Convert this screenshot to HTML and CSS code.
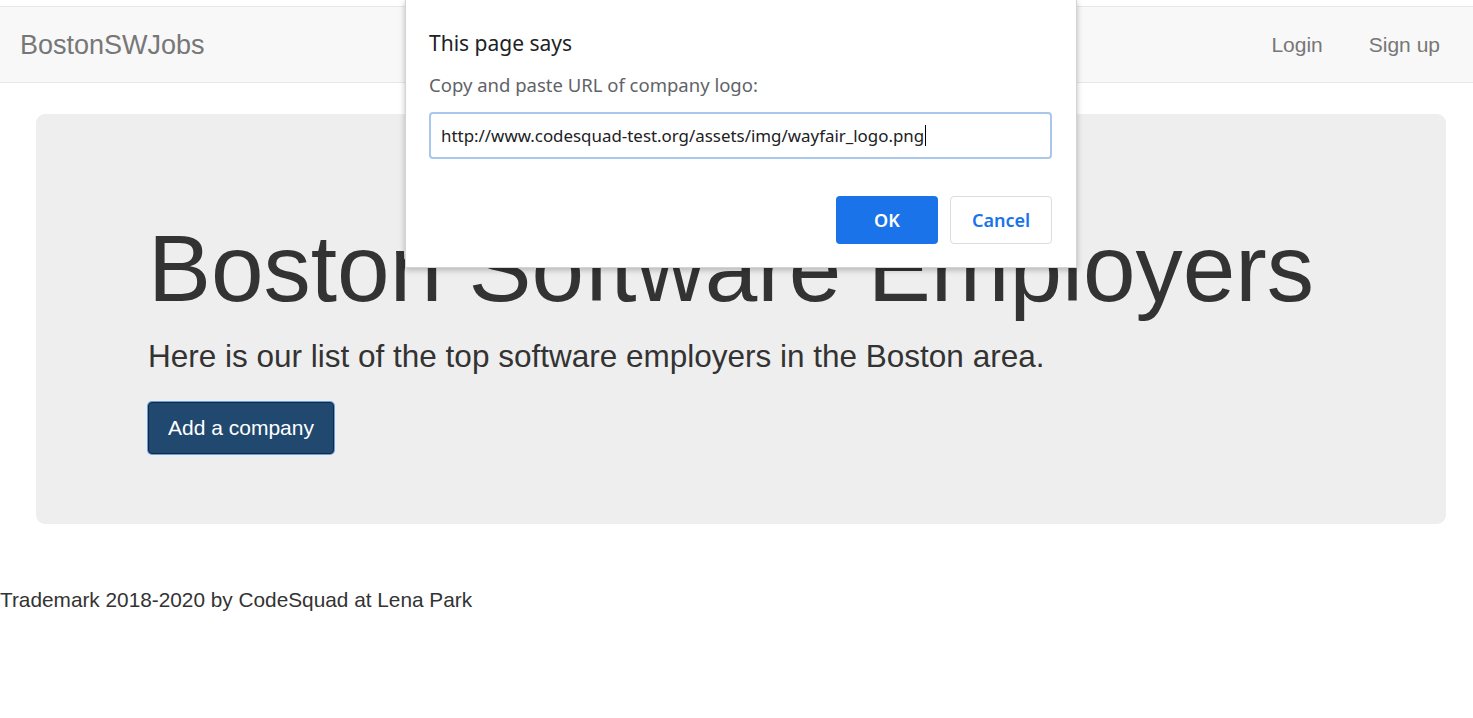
FILE: index.html
```html
<!DOCTYPE html>
<html lang="en">
<head>
<meta charset="utf-8">
<title>BostonSWJobs</title>
<link rel="stylesheet" href="styles.css">
</head>
<body>
<div class="page">
  <nav class="navbar">
    <a class="brand" href="#">BostonSWJobs</a>
    <ul class="nav-links">
      <li><a href="#">Login</a></li>
      <li><a href="#">Sign up</a></li>
    </ul>
  </nav>
  <main class="main">
    <section class="jumbotron">
      <h1 class="title">Boston Software Employers</h1>
      <p class="lead">Here is our list of the top software employers in the Boston area.</p>
      <button class="btn-add" type="button">Add a company</button>
    </section>
  </main>
  <footer class="footer">Trademark 2018-2020 by CodeSquad at Lena Park</footer>
</div>
<div class="dialog">
  <div class="dialog-title">This page says</div>
  <div class="dialog-msg">Copy and paste URL of company logo:</div>
  <div class="dialog-input"><span class="input-text">http://www.codesquad-test.org/assets/img/wayfair_logo.png</span><span class="caret"></span></div>
  <div class="dialog-actions">
    <button class="btn-ok" type="button">OK</button>
    <button class="btn-cancel" type="button">Cancel</button>
  </div>
</div>
</body>
</html>
```
FILE: styles.css
```css
* { box-sizing: border-box; }
html, body { margin: 0; padding: 0; background: #fff; }
body {
  font-family: "Liberation Sans", Arial, Helvetica, sans-serif;
  color: #333;
  width: 1473px;
  height: 718px;
  overflow: hidden;
}
.page { padding-top: 6px; }
.navbar {
  height: 77px;
  background: #f8f8f8;
  border-top: 1px solid #e7e7e7;
  border-bottom: 1px solid #e7e7e7;
  display: flex;
  align-items: center;
  justify-content: space-between;
  padding: 0 33px 0 20px;
}
.brand {
  color: #777;
  font-size: 27px;
  text-decoration: none;
  line-height: 1;
  padding-top: 2px;
}
.nav-links {
  list-style: none;
  margin: 0;
  padding: 0;
  display: flex;
  gap: 46px;
}
.nav-links a {
  color: #777;
  font-size: 21px;
  text-decoration: none;
  line-height: 1;
}
.main { padding: 31px 27px 0 36px; }
.jumbotron {
  background: #eee;
  border-radius: 9px;
  height: 410px;
  padding: 102px 0 0 112px;
}
.title {
  margin: 0;
  font-size: 94.5px;
  font-weight: 400;
  line-height: 104px;
  color: #333;
}
.lead {
  margin: 14px 0 24px;
  font-size: 31.5px;
  line-height: 44px;
  color: #333;
}
.btn-add {
  display: block;
  width: 186px;
  height: 52px;
  font-family: "Liberation Sans", Arial, sans-serif;
  font-size: 21px;
  color: #fff;
  background: #21496f;
  border: 1px solid #0e2a45;
  border-radius: 4px;
  box-shadow: 0 0 0 1px #6b9fe0;
  padding: 0;
}
.footer {
  margin-top: 61px;
  font-size: 20.8px;
  line-height: 30px;
  color: #333;
}
.dialog {
  position: absolute;
  left: 405px;
  top: 0;
  width: 672px;
  height: 268px;
  background: #fff;
  border: 1px solid #d4d4d4;
  border-top: none;
  box-shadow: 0 2px 6px rgba(0,0,0,0.25);
  padding: 28px 24px 0 23px;
  font-family: "Noto Sans", "Open Sans", sans-serif;
}
.dialog-title {
  font-size: 21px;
  line-height: 30px;
  color: #202124;
}
.dialog-msg {
  margin-top: 14px;
  font-size: 18.5px;
  line-height: 26px;
  color: #5f6368;
}
.dialog-input {
  margin-top: 14px;
  height: 47px;
  border: 2px solid #a8c7ea;
  border-radius: 4px;
  display: flex;
  align-items: center;
  padding-left: 10px;
  font-size: 16.9px;
  color: #202124;
}
.caret {
  display: inline-block;
  width: 1px;
  height: 21px;
  background: #000;
  margin-left: 1px;
}
.dialog-actions {
  margin-top: 37px;
  display: flex;
  justify-content: flex-end;
  gap: 12px;
}
.btn-ok, .btn-cancel {
  width: 102px;
  height: 48px;
  border-radius: 4px;
  font-family: "Noto Sans", "Open Sans", sans-serif;
  font-size: 18px;
  font-weight: 600;
  padding: 0;
}
.btn-ok {
  background: #1a73e8;
  color: #fff;
  border: none;
}
.btn-cancel {
  background: #fff;
  color: #1a73e8;
  border: 1px solid #dadce0;
}
```
